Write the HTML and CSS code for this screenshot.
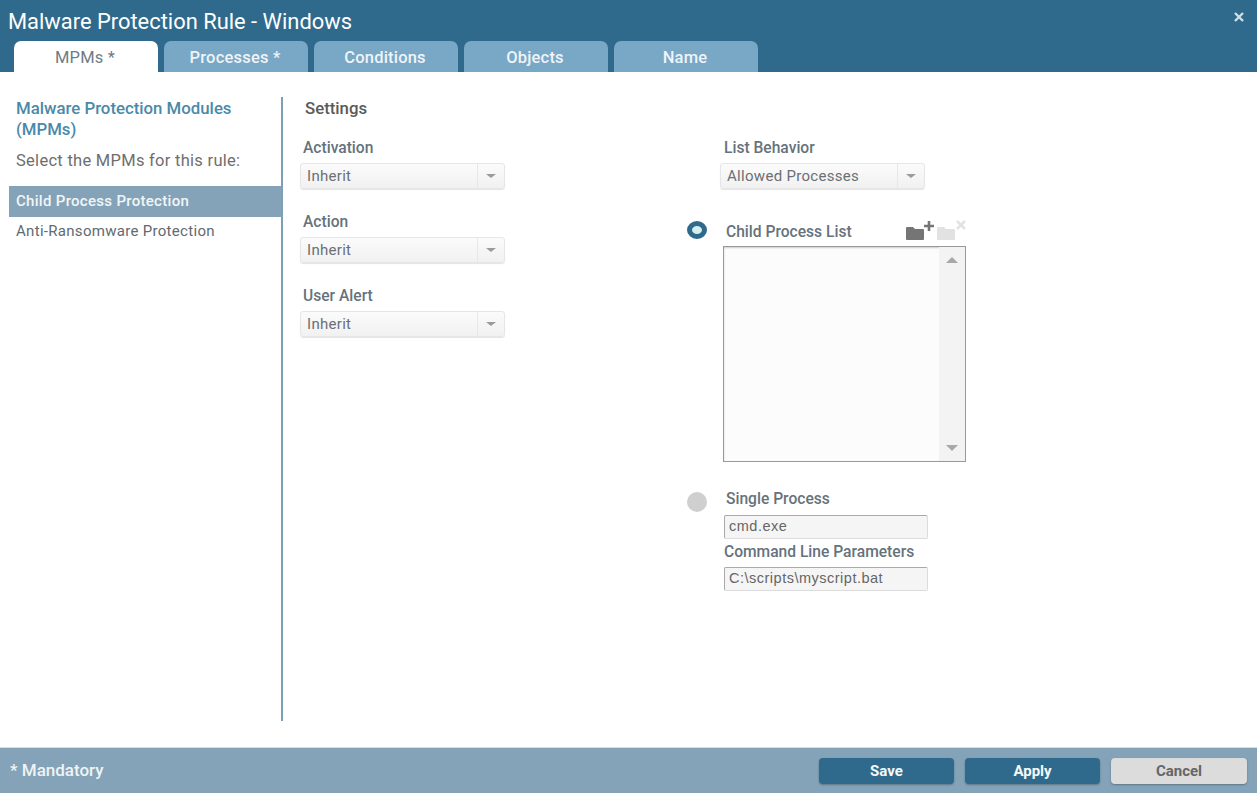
FILE: index.html
```html
<!DOCTYPE html>
<html lang="en">
<head>
<meta charset="utf-8">
<title>Malware Protection Rule - Windows</title>
<link rel="stylesheet" href="styles.css">
</head>
<body>
<div class="dialog">
  <header class="head">
    <div class="title-row">
      <h1 class="title">Malware Protection Rule - Windows</h1>
      <svg class="close" width="10" height="10" viewBox="0 0 10 10"><path d="M1 1l8 8M9 1l-8 8" stroke="#cfdee7" stroke-width="2.400" fill="none"/></svg>
    </div>
    <nav class="tabs">
      <span class="tab active">MPMs *</span>
      <span class="tab">Processes *</span>
      <span class="tab">Conditions</span>
      <span class="tab">Objects</span>
      <span class="tab">Name</span>
    </nav>
  </header>
  <main class="main">
    <aside class="side">
      <h2 class="side-title">Malware Protection Modules (MPMs)</h2>
      <p class="side-hint">Select the MPMs for this rule:</p>
      <div class="side-item selected">Child Process Protection</div>
      <div class="side-item">Anti-Ransomware Protection</div>
    </aside>
    <section class="content">
      <div class="col-left">
        <h3 class="settings">Settings</h3>
        <div class="field">
          <label class="label">Activation</label>
          <div class="select"><span class="select-text">Inherit</span><span class="select-btn"><i class="caret"></i></span></div>
        </div>
        <div class="field">
          <label class="label">Action</label>
          <div class="select"><span class="select-text">Inherit</span><span class="select-btn"><i class="caret"></i></span></div>
        </div>
        <div class="field">
          <label class="label">User Alert</label>
          <div class="select"><span class="select-text">Inherit</span><span class="select-btn"><i class="caret"></i></span></div>
        </div>
      </div>
      <div class="col-right">
        <div class="behavior">
          <label class="label">List Behavior</label>
          <div class="select"><span class="select-text">Allowed Processes</span><span class="select-btn"><i class="caret"></i></span></div>
        </div>
        <div class="option option-list">
          <span class="radio on"></span>
          <div class="option-body">
            <div class="list-head">
              <span class="label">Child Process List</span>
              <svg class="icons" width="60" height="21" viewBox="0 0 60 21">
                <path d="M1 7h6l2 2h8a1 1 0 0 1 1 1v9a1 1 0 0 1-1 1H1a1 1 0 0 1-1-1V8a1 1 0 0 1 1-1z" fill="#757575"/>
                <path d="M23 1v10M18 6h10" stroke="#757575" stroke-width="2.600" fill="none"/>
                <path d="M32 7h6l2 2h8a1 1 0 0 1 1 1v9a1 1 0 0 1-1 1H32a1 1 0 0 1-1-1V8a1 1 0 0 1 1-1z" fill="#e2e2e2"/>
                <path d="M51 1l8 8M59 1l-8 8" stroke="#e2e2e2" stroke-width="2.600" fill="none"/>
              </svg>
            </div>
            <div class="listbox">
              <div class="scroll"><i class="tri up"></i><i class="tri down"></i></div>
            </div>
          </div>
        </div>
        <div class="option option-single">
          <span class="radio off"></span>
          <div class="option-body">
            <span class="label">Single Process</span>
            <div class="input">cmd.exe</div>
            <label class="label label-cmd">Command Line Parameters</label>
            <div class="input">C:\scripts\myscript.bat</div>
          </div>
        </div>
      </div>
    </section>
  </main>
  <footer class="foot">
    <span class="mandatory">* Mandatory</span>
    <div class="buttons">
      <span class="btn primary">Save</span>
      <span class="btn primary">Apply</span>
      <span class="btn cancel">Cancel</span>
    </div>
  </footer>
</div>
</body>
</html>
```
FILE: styles.css
```css
* { box-sizing: border-box; }
html, body { margin: 0; height: 100%; }
body { font-family: Roboto, "Liberation Sans", sans-serif; color: #5d5d5d; background: #fff; overflow: hidden; }
.dialog { width: 1257px; height: 793px; display: flex; flex-direction: column; }

.head { height: 72px; background: #2f6a8c; display: flex; flex-direction: column; flex: none; }
.title-row { height: 41px; display: flex; justify-content: space-between; padding: 8px 13px 0 8px; }
.title { margin: 0; font-size: 21.900px; line-height: 27px; font-weight: 400; color: #fff; }
.close { margin-top: 4px; }
.tabs { display: flex; gap: 6px; padding-left: 14px; height: 31px; }
.tab { width: 144px; padding-right: 2px; background: #79a7c6; color: #eef4f8; border-radius: 7px 7px 0 0; font-size: 16.500px; letter-spacing: 0.200px; font-weight: 500; text-align: center; line-height: 33px; }
.tab.active { background: #fff; color: #6f7b84; font-weight: 400; }

.main { flex: 1; display: flex; align-items: flex-start; padding-top: 25px; }
.side { width: 274px; height: 624px; margin-left: 9px; border-right: 2px solid #7da0b7; flex: none; }
.side-title { margin: 1px 0 0; padding: 0 7px; font-size: 16.800px; line-height: 21px; font-weight: 500; color: #4a8aa8; }
.side-hint { margin: 10px 0 15px; padding: 0 7px; font-size: 16.500px; letter-spacing: 0.280px; line-height: 21px; color: #6e6e6e; }
.side-item { height: 29px; padding: 0 7px; font-size: 15px; letter-spacing: 0.300px; line-height: 29px; color: #5f6a72; }
.side-item.selected { height: 31px; line-height: 31px; background: #84a3b8; color: #f2f5f7; font-weight: 500; }

.content { flex: 1; display: flex; padding-left: 17px; }
.col-left { width: 386px; flex: none; }
.settings { margin: 1px 0 0 5px; font-size: 16.800px; line-height: 21px; font-weight: 500; color: #5a5a5a; }
.field { margin-top: 19px; }
.field + .field { margin-top: 23px; }
.label { display: block; font-size: 15.600px; line-height: 20px; font-weight: 500; color: #66727b; }
.field > .label { padding-left: 3px; }
.select { width: 205px; height: 26px; margin-top: 5px; border: 1px solid #e6e6e6; border-radius: 3px; background: linear-gradient(#fbfbfb, #f1f1f1); display: flex; box-shadow: 0 1px 1px #e4e4e4; }
.select-text { flex: 1; padding-left: 6px; font-size: 15px; line-height: 25px; color: #6b6f74; letter-spacing: 0.300px; }
.select-btn { width: 27px; border-left: 1px solid #e8e8e8; display: flex; align-items: center; justify-content: center; }
.caret { width: 0; height: 0; border: 5px solid transparent; border-top: 4px solid #9b9b9b; border-bottom: 0; }

.col-right { width: 300px; padding-top: 41px; padding-left: 1px; }
.behavior { margin-left: 33px; }
.behavior > .label { padding-left: 4px; }
.behavior > .select { margin-top: 5px; }
.option { display: flex; }
.radio { width: 20px; height: 20px; border-radius: 50%; flex: none; }
.radio.on { height: 18px; background: #d4eff0; border: 5px solid #2f6a8c; }
.radio.off { background: #cfcfcf; }
.option-body { margin-left: 16px; }
.option-list { margin-top: 32px; }
.list-head { display: flex; align-items: flex-end; width: 243px; height: 26px; margin-top: -1px; padding-left: 3px; }
.list-head .label { flex: 1; line-height: 18px; margin-bottom: 5px; }
.icons { margin-bottom: 5px; flex: none; }
.listbox { width: 243px; height: 216px; border: 1px solid #999; box-shadow: inset 0 1px 2px #ccc; background: #fcfcfc; display: flex; justify-content: flex-end; }
.scroll { width: 26px; background: #f3f3f3; display: flex; flex-direction: column; justify-content: space-between; align-items: center; padding: 10px 0 10px; }
.tri { width: 0; height: 0; border: 6px solid transparent; }
.tri.up { border-top: 0; border-bottom: 6px solid #a8a8a8; }
.tri.down { border-bottom: 0; border-top: 6px solid #a8a8a8; }

.option-single { margin-top: 30px; }
.option-single .label { padding-left: 3px; line-height: 14px; margin-top: 0; }
.option-single .label-cmd { padding-left: 1px; margin-top: 6px; }
.input { width: 204px; height: 24px; margin-top: 9px; margin-left: 1px; border: 1px solid #dcdcdc; border-top-color: #aaa; border-left-color: #aaa; border-radius: 2px; background: #f5f5f5; font-family: "Liberation Sans", Arial, sans-serif; font-size: 14.500px; line-height: 21px; padding-left: 4px; color: #666; letter-spacing: 0.500px; }
.label-cmd + .input { margin-top: 8px; }

.foot { height: 46px; flex: none; background: #84a3b8; border-top: 1px solid #d8e0e6; display: flex; justify-content: space-between; align-items: center; padding: 0 10px; }
.mandatory { font-size: 17px; font-weight: 500; color: #eef3f6; margin-top: -2px; }
.buttons { display: flex; gap: 11px; }
.btn { width: 135px; height: 26px; border-radius: 4px; font-size: 15px; font-weight: 700; line-height: 26px; text-align: center; box-shadow: 0 1px 2px #5d7688; }
.btn.primary { background: #2f6a8c; color: #f4f8fa; }
.btn.cancel { width: 136px; background: #dcdcdc; color: #666; }
```
